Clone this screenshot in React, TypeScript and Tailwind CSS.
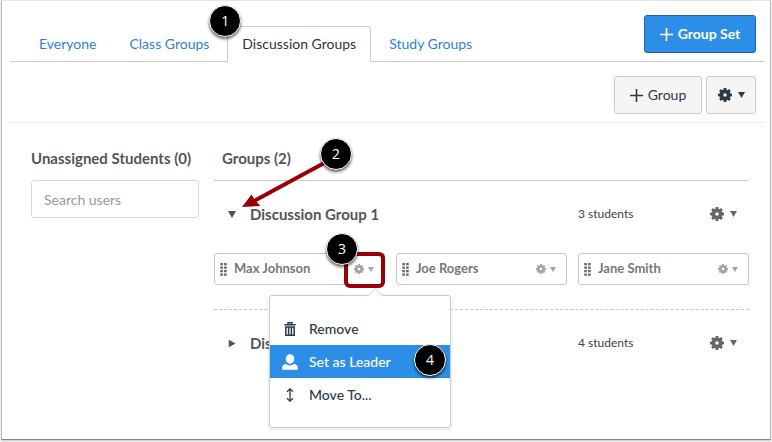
import React from "react";
import clsx from "clsx";

interface IconProps {
  className?: string;
}

const GearIcon: React.FC<IconProps> = ({ className }) => (
  <svg viewBox="0 0 16 16" className={className} aria-hidden="true">
    <circle cx="8" cy="8" r="4.1" fill="none" stroke="currentColor" strokeWidth="4.200" />
    {[0, 45, 90, 135, 180, 225, 270, 315].map((angle) => (
      <path key={angle} d="M6.100 3 6.500 0h3l.4 3z" fill="currentColor" transform={`rotate(${angle} 8 8)`} />
    ))}
  </svg>
);

const CaretIcon: React.FC<IconProps> = ({ className }) => (
  <svg viewBox="0 0 8 6" preserveAspectRatio="none" className={className} aria-hidden="true">
    <path d="M0 0h8L4 6z" fill="currentColor" />
  </svg>
);

const PlusIcon: React.FC<IconProps> = ({ className }) => (
  <svg viewBox="0 0 13 13" className={className} aria-hidden="true">
    <path d="M6.500 0v13M0 6.500h13" stroke="currentColor" strokeWidth="1.600" />
  </svg>
);

const GripIcon: React.FC<IconProps> = ({ className }) => (
  <svg viewBox="0 0 7 13" className={className} aria-hidden="true" fill="currentColor">
    {[0, 3.5, 7, 10.5].map((y) => (
      <g key={y}>
        <rect x=".3" y={y} width="2.600" height="2.300" />
        <rect x="4.100" y={y} width="2.600" height="2.300" />
      </g>
    ))}
  </svg>
);

const TrashIcon: React.FC<IconProps> = ({ className }) => (
  <svg viewBox="0 0 12 14" className={className} aria-hidden="true" fill="none" stroke="currentColor">
    <path d="M.3 2.8h11.4M4 2.4V.8h4v1.6" strokeWidth="1.4" />
    <path d="M1.8 5v8.2h8.4V5zM4.6 5v8M7.4 5v8" strokeWidth="1.5" />
  </svg>
);

const UserIcon: React.FC<IconProps> = ({ className }) => (
  <svg viewBox="0 0 16 16" className={className} aria-hidden="true" fill="currentColor">
    <path d="M8 .3c2.500 0 4.200 1.900 4.200 4.500S10.500 9.700 8 9.700 3.800 7.400 3.800 4.800 5.500.3 8 .3z" />
    <path d="M.3 15.700v-2.500c0-1.500 1-2.400 3.500-3.500.9 1 2.500 1.700 4.200 1.700s3.300-.7 4.200-1.700c2.500 1.100 3.500 2 3.500 3.500v2.500z" />
  </svg>
);

const MoveIcon: React.FC<IconProps> = ({ className }) => (
  <svg viewBox="0 0 8 14" className={className} aria-hidden="true" fill="none" stroke="currentColor" strokeWidth="1.3">
    <path d="M4 1v12M1 3.800 4 .9l3 2.900M1 10.200l3 2.900 3-2.900" />
  </svg>
);

const Badge: React.FC<{ children: React.ReactNode; className?: string }> = ({ children, className }) => (
  <span
    className={clsx(
      "absolute z-20 flex size-8 items-center justify-center rounded-full border border-white bg-black font-['Open_Sans',sans-serif] text-sm font-normal text-white shadow-[0_2px_3px_rgba(0,0,0,0.6)]",
      className
    )}
  >
    {children}
  </span>
);

const tabs = ["Everyone", "Class Groups", "Discussion Groups", "Study Groups"];

const menuItems = [
  { label: "Remove", icon: <TrashIcon className="h-3.5 w-3" /> },
  { label: "Set as Leader", icon: <UserIcon className="size-4" /> },
  { label: "Move To...", icon: <MoveIcon className="h-3.5 w-2" /> },
];

const MemberMenu: React.FC = () => (
  <div className="absolute top-[41px] left-[54px] z-10 w-[182px] rounded-[3px] border border-[#c7cdd1] bg-white py-4 shadow-[0_1px_4px_rgba(0,0,0,0.12)]">
    <svg viewBox="0 0 18 9" className="absolute -top-2 left-24 h-[9px] w-[18px]" aria-hidden="true">
      <path d="M1 8.500 9 .5l8 8" fill="#fff" stroke="#c7cdd1" />
      <path d="M2 8.500h14" stroke="#fff" />
    </svg>
    <ul>
      {menuItems.map(({ label, icon }) => {
        const selected = label === "Set as Leader";
        return (
          <li key={label} className="relative">
            <button
              type="button"
              className={clsx(
                "flex h-[33px] w-full items-center gap-2 pl-2.5 text-left text-sm font-medium",
                selected ? "bg-[#2d8ee8] text-white" : "text-[#2d3b45]"
              )}
            >
              <span className="flex w-5 justify-center">{icon}</span>
              <span className="pl-px">{label}</span>
            </button>
            {selected && <Badge className="-top-px right-1">4</Badge>}
          </li>
        );
      })}
    </ul>
  </div>
);

const Member: React.FC<{ name: string; menuOpen?: boolean }> = ({ name, menuOpen }) => (
  <li className="relative flex h-8 items-center rounded-[3px] border border-[#c4c6c8] bg-white pr-2.5 pl-[5px]">
    <GripIcon className="h-[13px] w-[7px] text-[#666]" />
    <span className="flex-1 pl-[7px] text-[13px] font-bold text-[#777]">{name}</span>
    <button type="button" aria-label={`Options for ${name}`} className="flex items-center gap-1 text-[#a5a5a5]">
      <GearIcon className="size-2.5" />
      <CaretIcon className="h-[5px] w-1.5" />
    </button>
    {menuOpen && (
      <>
        <span className="absolute -top-0.5 -right-px h-9 w-[41px] rounded-md border-4 border-[#960006]" />
        <Badge className="-top-[21px] right-[26px]">3</Badge>
        <MemberMenu />
      </>
    )}
  </li>
);

const GroupHeader: React.FC<{ name: string; count: string; open?: boolean }> = ({ name, count, open }) => (
  <div className="grid h-[66px] grid-cols-3 items-center gap-[11px]">
    <h3 className="col-span-2 text-[15px] font-bold text-[#555]">
      <button type="button" aria-expanded={!!open} className="flex items-center pl-3.5">
        <span className="flex w-[22px]">
          <CaretIcon className={clsx("h-[7px] w-2", !open && "-rotate-90")} />
        </span>
        {name}
      </button>
    </h3>
    <div className="flex items-center justify-between pr-3">
      <span className="text-xs text-[#444]">{count}</span>
      <button type="button" aria-label={`${name} settings`} className="flex items-center gap-1.5 text-[#666]">
        <GearIcon className="size-3.5" />
        <CaretIcon className="h-1.5 w-[7px]" />
      </button>
    </div>
  </div>
);

export default function App() {
  return (
    <div className="flex min-h-screen bg-white px-px pb-0.5 font-[Lato,sans-serif] text-[#2d3b45]">
      <div className="flex-1 border border-t-[#e5e5e5] border-r-[#bbb] border-b-[#858585] border-l-[#bbb] pr-[5px] pl-2 shadow-[0_1px_2px_rgba(0,0,0,0.25)]">
        <header className="flex items-end justify-between border-b border-[#c7cdd1] pt-3.5 pr-[9px] pl-3.5">
          <nav className="-mb-px flex gap-[3px]">
            {tabs.map((tab) => {
              const active = tab === "Discussion Groups";
              return (
                <a
                  key={tab}
                  href="#"
                  className={clsx(
                    "relative flex h-9 items-center rounded-t-[3px] border px-3.5 text-sm",
                    active ? "border-[#c7cdd1] border-b-white bg-white text-[#333]" : "border-transparent text-[#2d7fe0]"
                  )}
                >
                  {tab}
                  {active && <Badge className="-top-[22px] -left-[19px]">1</Badge>}
                </a>
              );
            })}
          </nav>
          <button
            type="button"
            className="mb-2 flex h-[38px] w-28 items-center justify-center gap-[5px] rounded-[3px] border border-[#1f67ad] bg-[#2d8ee8] text-sm font-bold text-white"
          >
            <PlusIcon className="size-[13px]" />
            Group Set
          </button>
        </header>

        <div className="flex justify-end gap-1 border-b border-[#ececec] pt-3.5 pr-[9px] pb-2">
          <button
            type="button"
            className="flex h-[38px] w-[88px] items-center justify-center gap-[5px] rounded-[3px] border border-[#c7cdd1] bg-[#f5f5f5] text-sm"
          >
            <PlusIcon className="size-[13px]" />
            Group
          </button>
          <button
            type="button"
            aria-label="Group set settings"
            className="flex h-[38px] w-[50px] items-center justify-center gap-1.5 rounded-[3px] border border-[#c7cdd1] bg-[#f5f5f5]"
          >
            <GearIcon className="size-3.5" />
            <CaretIcon className="h-1.5 w-[7px]" />
          </button>
        </div>

        <main className="flex gap-[15px] pr-4 pl-[21px]">
          <aside className="w-[168px] shrink-0">
            <h2 className="flex h-[57px] items-center pt-3.5 text-[15px] font-bold whitespace-nowrap text-[#555]">
              Unassigned Students (0)
            </h2>
            <input
              type="text"
              aria-label="Search users"
              placeholder="Search users"
              className="h-[38px] w-full rounded-[3px] border border-[#d5dae0] px-3 text-sm placeholder:text-[#999]"
            />
          </aside>

          <section className="relative flex-1">
            <h2 className="flex h-[58px] items-center border-b border-[#c7cdd1] pt-3.5 pl-2 text-[15px] font-bold text-[#555]">
              Groups (2)
            </h2>
            <svg viewBox="0 0 90 50" className="absolute top-[36px] left-[26px] z-10 h-[50px] w-[90px]" aria-hidden="true">
              <path d="M86 3 14 42" stroke="#960006" strokeWidth="4" />
              <path d="M2 48 11.500 35.500l3.300 5.200 5.500 6.300z" fill="#960006" />
            </svg>
            <Badge className="top-[15px] left-[106px]">2</Badge>

            <div className="border-b border-dashed border-[#c4c6c8] pb-6">
              <GroupHeader name="Discussion Group 1" count="3 students" open />
              <ul className="mt-1.5 grid grid-cols-3 gap-[11px]">
                <Member name="Max Johnson" menuOpen />
                <Member name="Joe Rogers" />
                <Member name="Jane Smith" />
              </ul>
            </div>
            <GroupHeader name="Discussion Group 2" count="4 students" />
          </section>
        </main>
      </div>
    </div>
  );
}
